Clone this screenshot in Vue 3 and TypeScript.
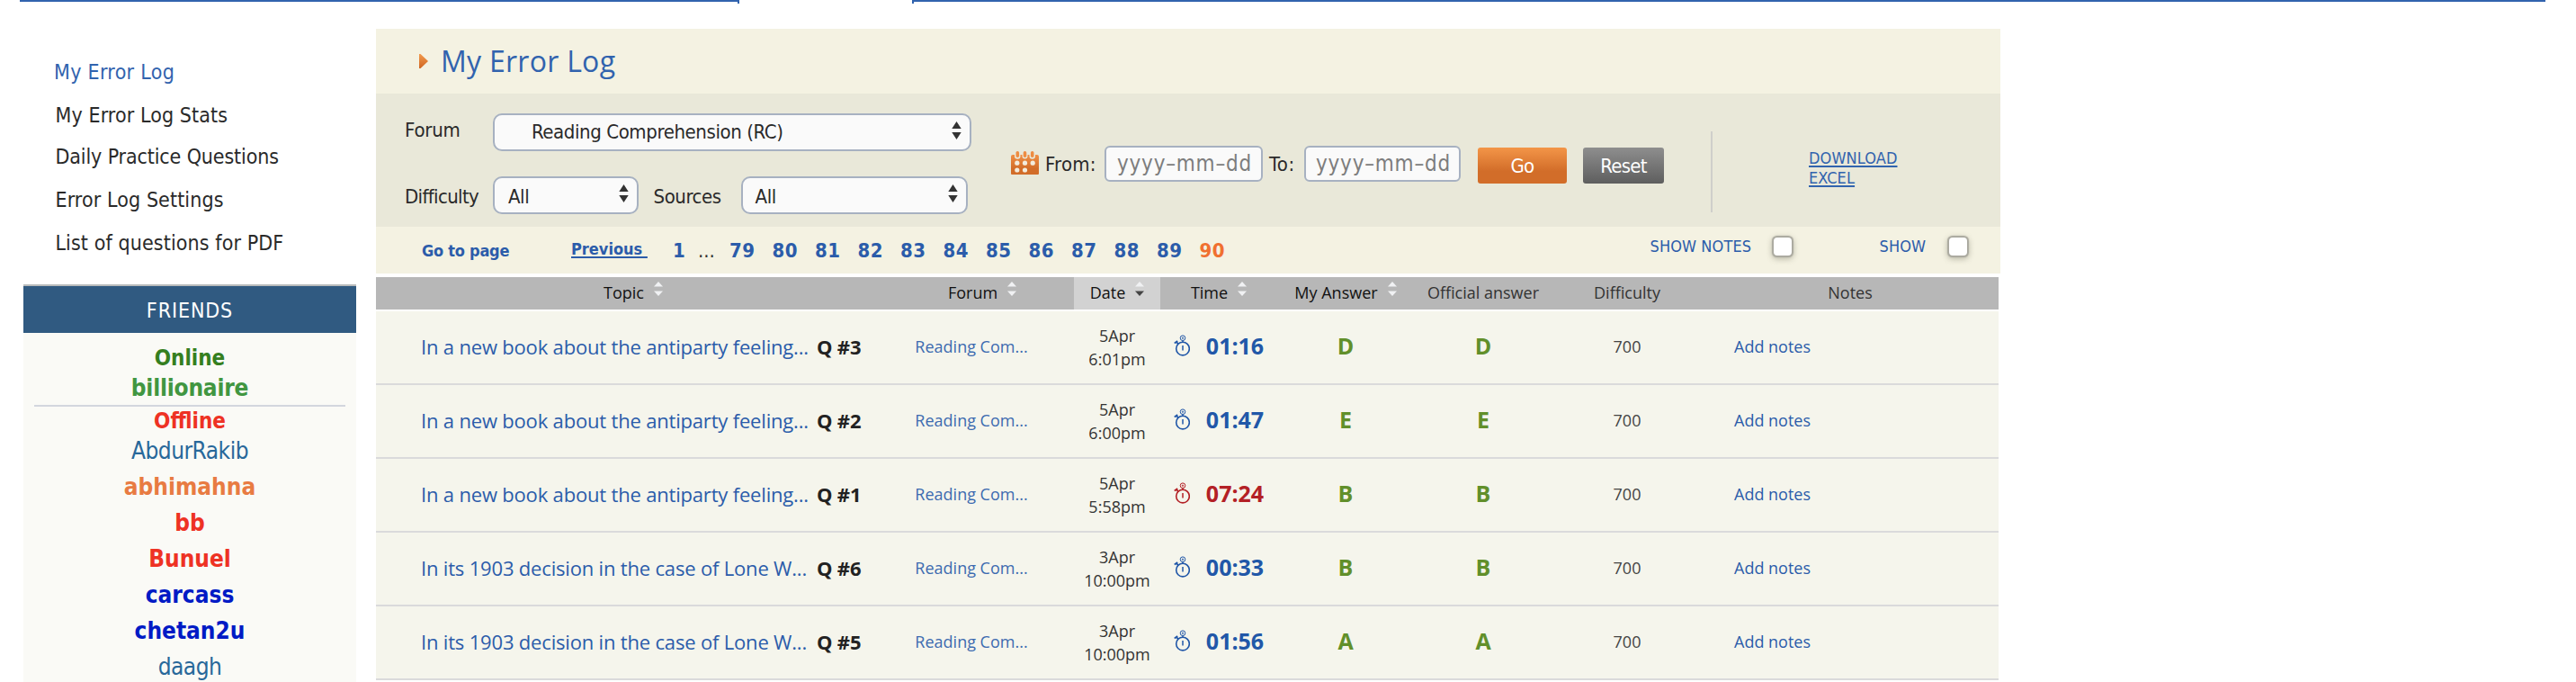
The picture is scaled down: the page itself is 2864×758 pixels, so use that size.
<script setup lang="ts">
interface Friend { name: string; kind: string }
interface Entry {
  topic: string
  q: number
  day: string
  hour: string
  time: string
  slow?: boolean
  mine: string
  official: string
}

const menu = [
  'My Error Log',
  'My Error Log Stats',
  'Daily Practice Questions',
  'Error Log Settings',
  'List of questions for PDF',
]

const friends: Friend[] = [
  { name: 'abhimahna', kind: 'orange' },
  { name: 'bb', kind: 'red' },
  { name: 'Bunuel', kind: 'red' },
  { name: 'carcass', kind: 'navy' },
  { name: 'chetan2u', kind: 'navy' },
  { name: 'daagh', kind: 'plain' },
]

const pages = [79, 80, 81, 82, 83, 84, 85, 86, 87, 88, 89, 90]
const currentPage = 90

const columns = [
  { label: 'Topic', sort: true },
  { label: 'Forum', sort: true },
  { label: 'Date', sort: true, active: true },
  { label: 'Time', sort: true },
  { label: 'My Answer', sort: true },
  { label: 'Official answer' },
  { label: 'Difficulty' },
  { label: 'Notes' },
]

const book = 'In a new book about the antiparty feeling...'
const wolf = 'In its 1903 decision in the case of Lone W...'
const entries: Entry[] = [
  { topic: book, q: 3, day: '5Apr', hour: '6:01pm', time: '01:16', mine: 'D', official: 'D' },
  { topic: book, q: 2, day: '5Apr', hour: '6:00pm', time: '01:47', mine: 'E', official: 'E' },
  { topic: book, q: 1, day: '5Apr', hour: '5:58pm', time: '07:24', slow: true, mine: 'B', official: 'B' },
  { topic: wolf, q: 6, day: '3Apr', hour: '10:00pm', time: '00:33', mine: 'B', official: 'B' },
  { topic: wolf, q: 5, day: '3Apr', hour: '10:00pm', time: '01:56', mine: 'A', official: 'A' },
]
</script>

<template>
  <div class="page">
    <div class="topline">
      <div class="line line-left"></div>
      <div class="line line-right"></div>
    </div>
    <div class="layout">
      <aside class="sidebar">
        <nav class="menu">
          <a v-for="(item, i) in menu" :key="item" :class="{ active: i === 0 }">{{ item }}</a>
        </nav>
        <section class="friends">
          <h2>FRIENDS</h2>
          <div class="friend-list">
            <div class="status online">Online</div>
            <div class="first green">billionaire</div>
            <hr />
            <div class="status offline">Offline</div>
            <div class="first plain">AbdurRakib</div>
            <div class="rest">
              <div v-for="f in friends" :key="f.name" class="friend" :class="f.kind">{{ f.name }}</div>
            </div>
          </div>
        </section>
      </aside>

      <main class="content">
        <header class="title">
          <svg width="10" height="16" viewBox="0 0 10 16">
            <defs>
              <linearGradient id="tri" x1="0" y1="0" x2="0" y2="1">
                <stop offset="0" stop-color="#f29a4c" /><stop offset="1" stop-color="#cf6522" />
              </linearGradient>
            </defs>
            <path d="M0 0h1.5L10 8l-8.500 8H0z" fill="url(#tri)" />
          </svg>
          <h1>My Error Log</h1>
        </header>

        <section class="filters">
          <div class="selects">
            <div class="line-row">
              <label class="l-forum">Forum</label>
              <div class="select s-forum">
                <span>Reading Comprehension (RC)</span>
                <svg class="arrows" width="11" height="20" viewBox="0 0 11 20"><path d="M5.500 0l5.200 8H.3zM5.500 20l5.200-8H.3z" fill="#333" /></svg>
              </div>
            </div>
            <div class="line-row">
              <label class="l-diff">Difficulty</label>
              <div class="select s-diff">
                <span>All</span>
                <svg class="arrows" width="11" height="20" viewBox="0 0 11 20"><path d="M5.500 0l5.200 8H.3zM5.500 20l5.200-8H.3z" fill="#333" /></svg>
              </div>
              <label class="l-src">Sources</label>
              <div class="select s-src">
                <span>All</span>
                <svg class="arrows" width="11" height="20" viewBox="0 0 11 20"><path d="M5.500 0l5.200 8H.3zM5.500 20l5.200-8H.3z" fill="#333" /></svg>
              </div>
            </div>
          </div>

          <div class="dates">
            <svg class="calendar" width="31" height="26" viewBox="0 0 31 26">
              <defs>
                <linearGradient id="cal" x1="0" y1="0" x2="0" y2="1">
                  <stop offset="0" stop-color="#f08f45" /><stop offset=".7" stop-color="#d26d29" />
                </linearGradient>
              </defs>
              <path d="M0 25V6Q0 4 2 4h2v1.500a3 3 0 0 0 6.500 0V4h2v1.500a3 3 0 0 0 6 0V4h2v1.500a3 3 0 0 0 6.500 0V4h2q2 0 2 2v19q0 1-1 1H1q-1 0-1-1z" fill="url(#cal)" />
              <g fill="#ee8c42">
                <rect x="5.500" y="0" width="3.600" height="7" rx="1.800" />
                <rect x="13.700" y="0" width="3.600" height="7" rx="1.800" />
                <rect x="21.900" y="0" width="3.600" height="7" rx="1.800" />
              </g>
              <g fill="#f3ecdd">
                <circle cx="6.800" cy="13.200" r="2.600" /><circle cx="15.500" cy="13.200" r="2.600" /><circle cx="24.200" cy="13.200" r="2.600" />
                <circle cx="6.800" cy="21" r="2.600" /><circle cx="15.500" cy="21" r="2.600" />
              </g>
            </svg>
            <label class="from">From:</label>
            <div class="input i-from">yyyy–mm–dd</div>
            <label class="to">To:</label>
            <div class="input i-to">yyyy–mm–dd</div>
            <button class="go">Go</button>
            <button class="reset">Reset</button>
          </div>
          <div class="rule"></div>
          <a class="download"><span>DOWNLOAD</span><br /><span>EXCEL</span></a>
        </section>

        <section class="pager">
          <a class="goto">Go to page</a>
          <a class="previous">Previous&nbsp;</a>
          <a class="num one">1</a>
          <span class="dots">...</span>
          <a v-for="p in pages" :key="p" class="num" :class="{ current: p === currentPage }">{{ p }}</a>
          <span class="toggle notes">SHOW NOTES</span>
          <span class="check"></span>
          <span class="toggle show">SHOW</span>
          <span class="check"></span>
        </section>

        <section class="table">
          <div class="grid head">
            <div v-for="c in columns" :key="c.label" class="th" :class="{ sortable: c.sort, active: c.active }">
              <span>{{ c.label }}</span>
              <svg v-if="c.sort" class="sorter" width="10" height="16" viewBox="0 0 10 16">
                <path d="M5 0l5 5.500H0z" fill="#f0f1f3" />
                <path d="M5 16l5-5.500H0z" :fill="c.active ? '#444' : '#f0f1f3'" />
              </svg>
            </div>
          </div>
          <div v-for="e in entries" :key="e.q + e.topic" class="grid row">
            <div class="topic"><a>{{ e.topic }}</a><b>Q #{{ e.q }}</b></div>
            <div class="forum">Reading Com...</div>
            <div class="date">{{ e.day }}<br />{{ e.hour }}</div>
            <div class="time" :class="{ slow: e.slow }">
              <svg width="18" height="24" viewBox="0 0 18 24" fill="none" stroke="currentColor">
                <circle cx="10" cy="15.600" r="7.300" stroke-width="1.600" />
                <circle cx="10" cy="3.700" r="2.800" stroke-width="1" />
                <circle cx="10" cy="3.700" r=".7" stroke-width="1" />
                <path d="M10 6.500v2M10 12v5.500" stroke-width="1.500" />
                <path d="M.8 9.500l3.400-2.500M2.500 7.500l2.300 2.700" stroke-width="1.900" />
              </svg>
              <b>{{ e.time }}</b>
            </div>
            <div class="answer">{{ e.mine }}</div>
            <div class="answer">{{ e.official }}</div>
            <div class="level">700</div>
            <div class="note">Add notes</div>
          </div>
        </section>
      </main>
    </div>
  </div>
</template>

<style>
html,
body {
  margin: 0;
  background: #fff;
  overflow: hidden;
}
</style>

<style scoped>
.page {
  width: 2864px;
  height: 758px;
  overflow: hidden;
  background: #fff;
  color: #2a2a2a;
  font-family: "DejaVu Sans Condensed", "DejaVu Sans", sans-serif;
  font-stretch: condensed;
}
.topline {
  display: flex;
  height: 4px;
  padding-left: 22px;
}
.line {
  box-sizing: border-box;
  height: 4px;
  border-top: 2px solid #3163ae;
}
.line-left { width: 800px; border-right: 2px solid #3163ae; }
.line-right { width: 1816px; margin-left: 192px; border-left: 2px solid #3163ae; }
.layout {
  display: flex;
  align-items: flex-start;
  padding-left: 26px;
}
.sidebar { width: 370px; padding-top: 52px; }
.menu {
  display: flex;
  flex-direction: column;
  padding-left: 35.500px;
  font-size: 23px;
  line-height: 48px;
  letter-spacing: 0.100px;
}
.menu a { white-space: nowrap; }
.menu .active { color: #3163ae; margin-left: -1.500px; letter-spacing: 0.300px; }
.menu a:nth-child(3) { margin-top: -2px; letter-spacing: -0.130px; }
.friends {
  margin-top: 22px;
  border-top: 2px solid #b9bbbb;
  background: #fafaf6;
  text-align: center;
}
.friends h2 {
  margin: 0;
  height: 52px;
  background: #305a81;
  color: #fff;
  font-size: 23px;
  font-weight: 400;
  line-height: 55px;
  letter-spacing: 0.900px;
}
.friend-list { height: 388px; padding: 12px 12px 0; font-size: 26px; overflow: hidden; }
.status { font-size: 24px; font-weight: 700; line-height: 32px; }
.first { line-height: 34px; }
.rest { padding-top: 3px; }
.friend { line-height: 40px; font-weight: 700; }
hr { height: 2px; margin: 2px 0 0; border: 0; background: #d3d6de; }
.online { color: #357f1f; }
.offline { color: #ee3224; }
.green { color: #419641; font-weight: 700; letter-spacing: -0.220px; }
.orange { color: #e87b42; }
.red { color: #ee3224; }
.navy { color: #001ac5; }
.friend-list .plain { color: #28689a; font-weight: 400; letter-spacing: -0.500px; }

.content { width: 1806px; margin-left: 22px; padding-top: 28px; }
.title {
  display: flex;
  align-items: center;
  gap: 14px;
  height: 72px;
  padding-left: 48px;
  background: #f4f2e2;
}
.title h1 {
  margin: 0;
  color: #3163ae;
  font: 400 32px/72px "Open Sans", sans-serif;
  letter-spacing: 0.270px;
}
.filters {
  display: flex;
  align-items: flex-start;
  height: 148px;
  padding-left: 32px;
  background: #e9e8d9;
  font-size: 22px;
}
.selects { display: flex; flex-direction: column; gap: 28px; width: 674px; padding-top: 22px; }
.line-row { display: flex; height: 42px; line-height: 42px; }
.line-row label { flex: none; white-space: nowrap; }
.l-forum { width: 98.400px; line-height: 37px; letter-spacing: -0.220px; }
.l-diff { width: 98.400px; line-height: 45px; letter-spacing: -0.650px; }
.l-src { width: 97px; margin-left: 16.600px; line-height: 45px; letter-spacing: -0.470px; }
.select {
  box-sizing: border-box;
  display: flex;
  justify-content: space-between;
  height: 42px;
  padding-right: 9px;
  border: 2px solid #a7b1c1;
  border-radius: 10px;
  background: #fafafa;
  line-height: 37px;
  letter-spacing: -0.400px;
}
.arrows { margin-top: 7px; }
.s-forum { width: 531.600px; padding-left: 40.500px; }
.s-diff { width: 161.600px; padding-left: 14.500px; line-height: 41px; }
.s-src { width: 252.400px; padding-left: 14px; line-height: 41px; }
.dates { display: flex; height: 44px; margin-top: 58px; line-height: 40px; }
.calendar { margin-top: 6px; }
.from { width: 66px; margin-left: 7px; letter-spacing: 0.250px; line-height: 41px; }
.to { width: 39px; margin-left: 7px; letter-spacing: 0.500px; line-height: 41px; }
.input {
  box-sizing: border-box;
  height: 40px;
  border: 2px solid #a7b1c1;
  border-radius: 6px;
  background: #fafafa;
  color: #7d7d7d;
  font-size: 24px;
  line-height: 37px;
  letter-spacing: 0.780px;
  white-space: nowrap;
}
.i-from { width: 176px; padding-left: 12px; }
.i-to { width: 174px; padding-left: 11px; }
button {
  height: 40px;
  margin: 2px 0 0;
  padding: 0;
  border: 0;
  border-radius: 3px;
  color: #fff;
  font: inherit;
  line-height: 41px;
  letter-spacing: -0.700px;
}
.go { width: 99px; margin-left: 19px; background: linear-gradient(#f39548, #d26d29 66%, #d26d29); }
.reset { box-sizing: border-box; width: 90px; margin-left: 18px; background: linear-gradient(#8e8e8e, #5e5e5e); }
.rule { width: 2px; height: 90px; margin: 42px 0 0 52px; background: #cfcfcb; }
.download {
  margin: 61px 0 0 107px;
  color: #3163ae;
  font-size: 18px;
  line-height: 22px;
  letter-spacing: 0.100px;
  text-decoration: underline;
  text-decoration-thickness: 2px;
  text-underline-offset: 2px;
}

.pager {
  display: flex;
  height: 52px;
  padding-left: 51px;
  background: #f4f2e2;
  color: #2b5caa;
  font-size: 22px;
  font-weight: 700;
  line-height: 53px;
  white-space: nowrap;
}
.pager > * { flex: none; }
.goto { width: 166px; font-size: 18px; letter-spacing: -0.250px; }
.previous {
  width: 113px;
  font-size: 18px;
  line-height: 49px;
  text-decoration: underline;
  text-decoration-thickness: 2px;
  text-underline-offset: 2px;
}
.num { width: 47.500px; letter-spacing: 0.500px; }
.one { width: 28px; }
.dots { width: 35px; color: #333; font-weight: 400; }
.current { color: #f07030; }
.toggle { font-size: 18px; font-weight: 400; line-height: 44px; letter-spacing: 0.100px; }
.notes { width: 136px; margin-left: 453.500px; }
.show { width: 76px; margin-left: 97px; }
.check {
  width: 20px;
  height: 20px;
  margin: 12px 1px 0;
  border-radius: 4px;
  background: #fff;
  box-shadow: 0 0 1px 1.500px #aaa99f, 0 2px 6px 2px rgba(80, 80, 60, 0.350);
}

.table { width: 1804px; margin-top: 4px; font: 18px/26px "Open Sans", sans-serif; }
.grid {
  display: grid;
  grid-template-columns: 572px 204px 96px 130px 152px 154px 166px 330px;
  align-items: center;
  text-align: center;
}
.head { height: 36px; margin-bottom: 2px; background: #b7b7b7; color: #333; }
.th { display: flex; justify-content: center; height: 36px; line-height: 34px; }
.sortable { color: #111; gap: 11px; }
.th.active { background: #d2d2d2; }
.sorter { margin-top: 5px; }
.row { height: 80px; border-bottom: 2px solid #dadadb; background: #f5f5ec; }
.topic {
  display: flex;
  padding: 0 0 2px 50px;
  font-size: 22px;
  letter-spacing: -0.180px;
  white-space: nowrap;
}
.topic a { width: 440px; text-align: left; color: #2b5caa; }
.topic b { color: #222; }
.forum { padding: 0 24px 2px 0; color: #3d6bb0; }
.date { color: #333; }
.time { display: flex; align-items: center; justify-content: center; gap: 18px; padding-bottom: 4px; color: #2157a8; }
.time b { font-size: 25px; }
.time svg { flex: none; }
.slow { color: #b32025; }
.answer { padding-bottom: 4px; color: #618f2a; font-size: 25px; font-weight: 700; }
.level { padding-bottom: 2px; color: #444; }
.note { padding: 0 0 2px 36px; text-align: left; color: #2b5caa; }
</style>
